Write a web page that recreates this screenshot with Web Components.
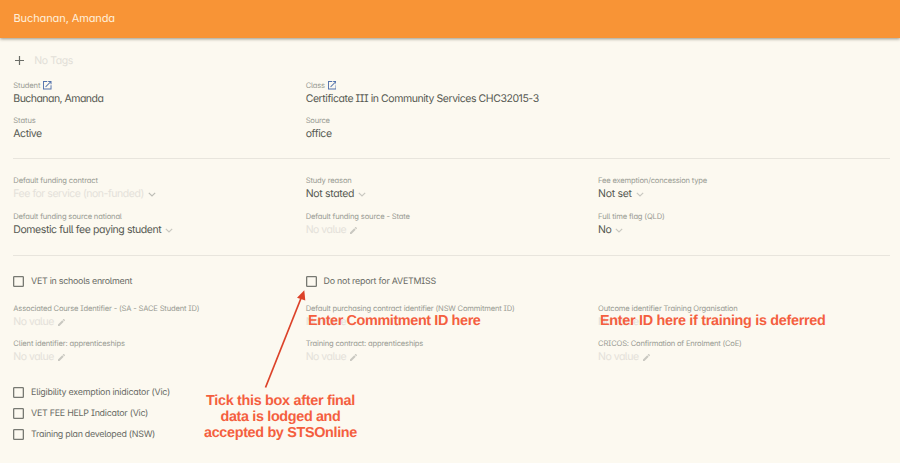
<!DOCTYPE html>
<html lang="en">
<head>
<meta charset="utf-8">
<title>Buchanan, Amanda</title>
<style>
html,body{margin:0;height:100%;background:#fcf9f0;overflow:hidden}
body{font-family:Inter,"Noto Sans",sans-serif;font-feature-settings:"cv05","cv08","cv11";color:#575a53;font-weight:400;text-rendering:geometricPrecision}
</style>
</head>
<body>
<enrolment-page></enrolment-page>
<script>
// Text on one line whose tracking is set so that it spans the width in its "w" attribute.
class FitText extends HTMLElement{
  connectedCallback(){
    const r=this.attachShadow({mode:'open'});
    r.innerHTML='<style>:host{display:inline-block;white-space:nowrap}span{display:inline-block}</style><span><slot></slot></span>';
    const w=parseFloat(this.getAttribute('w'));
    if(!w)return;
    const s=r.querySelector('span');
    const n=this.textContent.length;
    const natural=s.getBoundingClientRect().width;
    s.style.letterSpacing=((w-natural)/n)+'px';
  }
}

const ICONS={
  open:'<svg width="8.5" height="8.5" viewBox="3 3 18 18" style="color:#5272ac"><path fill="currentColor" d="M19 19H5V5h7V3H3v18h18v-9h-2v7zM14 3v2h3.6l-9.8 9.8 1.4 1.4L19 6.4V10h2V3h-7z"/></svg>',
  down:'<svg width="8" height="5" viewBox="0 0 8 5"><path fill="none" stroke="currentColor" stroke-width="1.2" d="M.8.8 4 4 7.2.8"/></svg>',
  edit:'<svg width="7" height="7" viewBox="3 3 18 18"><path fill="currentColor" d="M3 17.3V21h3.700l11-11-3.700-3.800L3 17.300zM20.700 7a1 1 0 0 0 0-1.400l-2.300-2.300a1 1 0 0 0-1.400 0l-1.900 1.800 3.800 3.800L20.700 7z"/></svg>'
};

class TitleBar extends HTMLElement{
  connectedCallback(){
    this.attachShadow({mode:'open'}).innerHTML=`<style>
    :host{display:flex;align-items:center;height:37.500px;box-sizing:border-box;padding:0 13.500px 1.500px;background:#f89436;color:#fff0dc;font-size:11px;box-shadow:0 1px 3px rgba(70,65,50,.55)}
    </style><slot></slot>`;
  }
}

class TagRow extends HTMLElement{
  connectedCallback(){
    this.attachShadow({mode:'open'}).innerHTML=`<style>
    :host{display:flex;align-items:center;gap:10px;height:16px;color:#e2dfd8;font-size:10.500px;padding-left:2px}
    svg{display:block;color:#6b6d67}
    </style><svg width="9" height="9" viewBox="0 0 9 9"><path fill="none" stroke="currentColor" stroke-width="1.200" d="M4.500 0v9M0 4.500h9"/></svg><slot></slot>`;
  }
}

class DataField extends HTMLElement{
  connectedCallback(){
    const a=n=>this.getAttribute(n)||'';
    const icon=a('icon');
    this.attachShadow({mode:'open'}).innerHTML=`<style>
    :host{display:block;min-width:0}
    .l,.v{display:flex;align-items:center;white-space:nowrap}
    .l{height:10px;font-size:7.600px;line-height:10px;color:#9a9c94;gap:3px}
    .v{height:16px;font-size:10.500px;line-height:16px;gap:4px}
    .v.muted{color:#e4e1da}
    svg{display:block;flex:none}
    .v svg{color:#c9c8c1;margin-top:1px}
    .v.dark svg{color:#bdbdb6}
    </style>
    <div class="l"><fit-text w="${a('lw')}">${a('label')}</fit-text>${this.hasAttribute('link')?ICONS.open:''}</div>
    <div class="v ${this.hasAttribute('muted')?'muted':''} ${a('tone')}"><fit-text w="${a('vw')}">${a('value')}</fit-text>${ICONS[icon]||''}</div>`;
  }
}

class CheckItem extends HTMLElement{
  connectedCallback(){
    this.attachShadow({mode:'open'}).innerHTML=`<style>
    :host{display:flex;align-items:center;gap:6.800px;height:12px;font-size:8.900px;color:#686a64}
    svg{display:block;flex:none}
    </style><svg width="11" height="11" viewBox="0 0 11 11"><rect x=".65" y=".65" width="9.700" height="9.700" rx=".7" fill="none" stroke="#777972" stroke-width="1.300"/></svg><slot></slot>`;
  }
}

class FieldGrid extends HTMLElement{
  connectedCallback(){
    this.attachShadow({mode:'open'}).innerHTML=`<style>
    :host{display:grid;grid-template-columns:repeat(3,292.400px);row-gap:var(--gap,9px)}
    </style><slot></slot>`;
  }
}

class NoteText extends HTMLElement{
  connectedCallback(){
    this.attachShadow({mode:'open'}).innerHTML=`<style>
    :host{position:absolute;display:flex;flex-direction:column;align-items:center;font:bold 14.400px/16px "Liberation Sans",Arial,sans-serif;font-feature-settings:normal;color:#f45f3f}
    </style><slot></slot>`;
  }
}

class EnrolmentPage extends HTMLElement{
  connectedCallback(){
    this.attachShadow({mode:'open'}).innerHTML=`<style>
    :host{display:block;position:relative;height:463px}
    main{padding:15px 10px 0 13.300px;display:flex;flex-direction:column}
    hr{border:0;height:1px;background:#e8e5dd;margin:0;width:876.500px}
    .a{margin:12px 0 16.500px}
    .b{margin:17px 0 17.500px;--gap:9.500px}
    .c{margin:19.700px 0 16px}
    .d{--gap:9.500px}
    .e{margin-top:21px;display:flex;flex-direction:column;gap:9.400px}
    .arrow{position:absolute;left:255px;top:280px}
    </style>
    <title-bar><fit-text w="101.500">Buchanan, Amanda</fit-text></title-bar>
    <main>
      <tag-row><fit-text w="38.500">No Tags</fit-text></tag-row>
      <field-grid class="a">
        <data-field label="Student" lw="27" link value="Buchanan, Amanda" vw="90"></data-field>
        <data-field label="Class" lw="19" link value="Certificate III in Community Services CHC32015-3" vw="233"></data-field><span></span>
        <data-field label="Status" lw="22.500" value="Active" vw="28.500"></data-field>
        <data-field label="Source" lw="24" value="office" vw="26"></data-field>
      </field-grid>
      <hr>
      <field-grid class="b">
        <data-field label="Default funding contract" lw="84.500" value="Fee for service (non-funded)" vw="130.500" muted tone="dark" icon="down"></data-field>
        <data-field label="Study reason" lw="46" value="Not stated" vw="48.500" icon="down"></data-field>
        <data-field label="Fee exemption/concession type" lw="109" value="Not set" vw="33.500" icon="down"></data-field>
        <data-field label="Default funding source national" lw="108.500" value="Domestic full fee paying student" vw="148" icon="down"></data-field>
        <data-field label="Default funding source - State" lw="104" value="No value" vw="40.500" muted icon="edit"></data-field>
        <data-field label="Full time flag (QLD)" lw="66.500" value="No" vw="13" icon="down"></data-field>
      </field-grid>
      <hr>
      <field-grid class="c">
        <check-item><fit-text w="101">VET in schools enrolment</fit-text></check-item>
        <check-item><fit-text w="112.500">Do not report for AVETMISS</fit-text></check-item>
      </field-grid>
      <field-grid class="d">
        <data-field label="Associated Course Identifier - (SA - SACE Student ID)" lw="186" value="No value" vw="40.500" muted icon="edit"></data-field>
        <data-field label="Default purchasing contract identifier (NSW Commitment ID)" lw="209" value="No value" vw="40.500" muted></data-field>
        <data-field label="Outcome identifier Training Organisation" lw="139.500" value="No value" vw="40.500" muted></data-field>
        <data-field label="Client identifier: apprenticeships" lw="111.500" value="No value" vw="40.500" muted icon="edit"></data-field>
        <data-field label="Training contract: apprenticeships" lw="117.500" value="No value" vw="40.500" muted icon="edit"></data-field>
        <data-field label="CRICOS: Confirmation of Enrolment (CoE)" lw="143.500" value="No value" vw="40.500" muted icon="edit"></data-field>
      </field-grid>
      <div class="e">
        <check-item><fit-text w="139">Eligibility exemption inidicator (Vic)</fit-text></check-item>
        <check-item><fit-text w="117">VET FEE HELP Indicator (Vic)</fit-text></check-item>
        <check-item><fit-text w="124">Training plan developed (NSW)</fit-text></check-item>
      </div>
    </main>
    <note-text style="left:308px;top:313px"><fit-text w="172.500">Enter Commitment ID here</fit-text></note-text>
    <note-text style="left:600px;top:313px"><fit-text w="225.500">Enter ID here if training is deferred</fit-text></note-text>
    <note-text style="left:204px;top:392.500px"><fit-text w="149">Tick this box after final</fit-text><fit-text w="120">data is lodged and</fit-text><fit-text w="153">accepted by STSOnline</fit-text></note-text>
    <svg class="arrow" width="60" height="115" viewBox="255 280 60 115"><path d="M265.500 387.500 301.500 297" stroke="#dc4229" stroke-width="1.700" fill="none"/><path d="M304.300 290.300 297 297.800 305.300 300.500z" fill="#dc4229"/></svg>`;
  }
}

customElements.define('fit-text',FitText);
customElements.define('title-bar',TitleBar);
customElements.define('tag-row',TagRow);
customElements.define('data-field',DataField);
customElements.define('check-item',CheckItem);
customElements.define('field-grid',FieldGrid);
customElements.define('note-text',NoteText);
customElements.define('enrolment-page',EnrolmentPage);
</script>
</body>
</html>
